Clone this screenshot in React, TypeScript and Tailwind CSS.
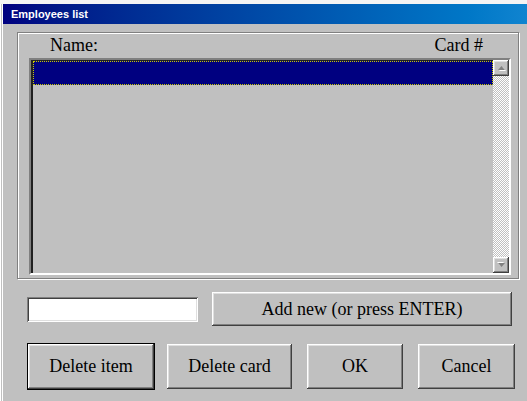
import React from 'react';

const raised =
  'bg-[#c0c0c0] shadow-[inset_-1px_-1px_0_#404040,inset_1px_1px_0_#ffffff,inset_-2px_-2px_0_#808080,inset_2px_2px_0_#dfdfdf]';

const sunken =
  'shadow-[inset_1px_1px_0_#808080,inset_-1px_-1px_0_#ffffff,inset_2px_2px_0_#404040,inset_-2px_-2px_0_#dfdfdf]';

function Arrow({ down }: { down?: boolean }) {
  return (
    <svg width="9" height="6" viewBox="0 0 9 6" className={down ? 'rotate-180' : ''}>
      <polygon points="1,5 4.5,1 8,5" fill="#ffffff" transform="translate(1,1)" />
      <polygon points="1,5 4.5,1 8,5" fill="#808080" />
    </svg>
  );
}

function ScrollButton({ down }: { down?: boolean }) {
  return (
    <div className={`h-[16px] w-[16px] flex items-center justify-center ${raised}`}>
      <Arrow down={down} />
    </div>
  );
}

function WinButton({
  label,
  width,
  isDefault,
}: {
  label: string;
  width: string;
  isDefault?: boolean;
}) {
  return (
    <button
      className={`h-[45px] ${width} ${raised} ${
        isDefault ? 'outline outline-1 outline-black' : ''
      } flex items-center justify-center text-[18px] text-black`}
    >
      {label}
    </button>
  );
}

export default function App() {
  return (
    <div
      className="w-[527px] h-[401px] overflow-hidden bg-[#c0c0c0] border-t-[4px] border-t-[#f4f4f4] shadow-[inset_1px_0_0_#ffffff,inset_2px_0_0_#c0c0c0,inset_3px_0_0_#ffffff]"
      style={{ fontFamily: '"Liberation Serif", "Times New Roman", serif' }}
    >
      {/* title bar */}
      <div className="ml-[3px] h-[20px] bg-gradient-to-r from-[#000080] to-[#1084d0] flex items-center pl-[8px]">
        <span className="text-white text-[11px] font-bold font-['Liberation_Sans',Arial,sans-serif]">
          Employees list
        </span>
      </div>

      {/* employees group */}
      <div className="mt-[8px] ml-[17px] w-[502px] h-[247px] border border-[#808080] shadow-[inset_1px_1px_0_#ffffff,1px_1px_0_#ffffff] flex flex-col">
        <div className="h-[25px] flex items-center justify-between pl-[32px] pr-[35px] text-[18px] text-black">
          <span>Name:</span>
          <span>Card #</span>
        </div>

        <div className="ml-[11px] w-[482px] h-[217px] bg-[#c0c0c0] border-2 border-t-[#808080] border-l-[#808080] border-r-[#ffffff] border-b-[#ffffff] flex">
          <div className="flex-1 flex flex-col border-t border-l-2 border-[#202020]">
            <div className="h-[24px] bg-[#000080] outline-1 outline-dotted outline-[#c8c800] -outline-offset-1" />
          </div>
          <div className="w-[16px] flex flex-col">
            <ScrollButton />
            <div className="flex-1 bg-[repeating-conic-gradient(#ffffff_0%_25%,#c0c0c0_0%_50%)] bg-size-[2px_2px]" />
            <ScrollButton down />
          </div>
        </div>
      </div>

      {/* new entry row */}
      <div className="mt-[13px] ml-[27px] flex items-center">
        <div className={`w-[171px] h-[25px] bg-white ${sunken}`} />
        <div className="ml-[14px]">
          <button
            className={`w-[300px] h-[34px] ${raised} flex items-center justify-center text-[18px] text-black`}
          >
            Add new (or press ENTER)
          </button>
        </div>
      </div>

      {/* actions */}
      <div className="mt-[18px] ml-[28px] flex">
        <WinButton label="Delete item" width="w-[126px]" isDefault />
        <div className="ml-[13px]">
          <WinButton label="Delete card" width="w-[125px]" />
        </div>
        <div className="ml-[15px]">
          <WinButton label="OK" width="w-[96px]" />
        </div>
        <div className="ml-[15px]">
          <WinButton label="Cancel" width="w-[97px]" />
        </div>
      </div>
    </div>
  );
}
